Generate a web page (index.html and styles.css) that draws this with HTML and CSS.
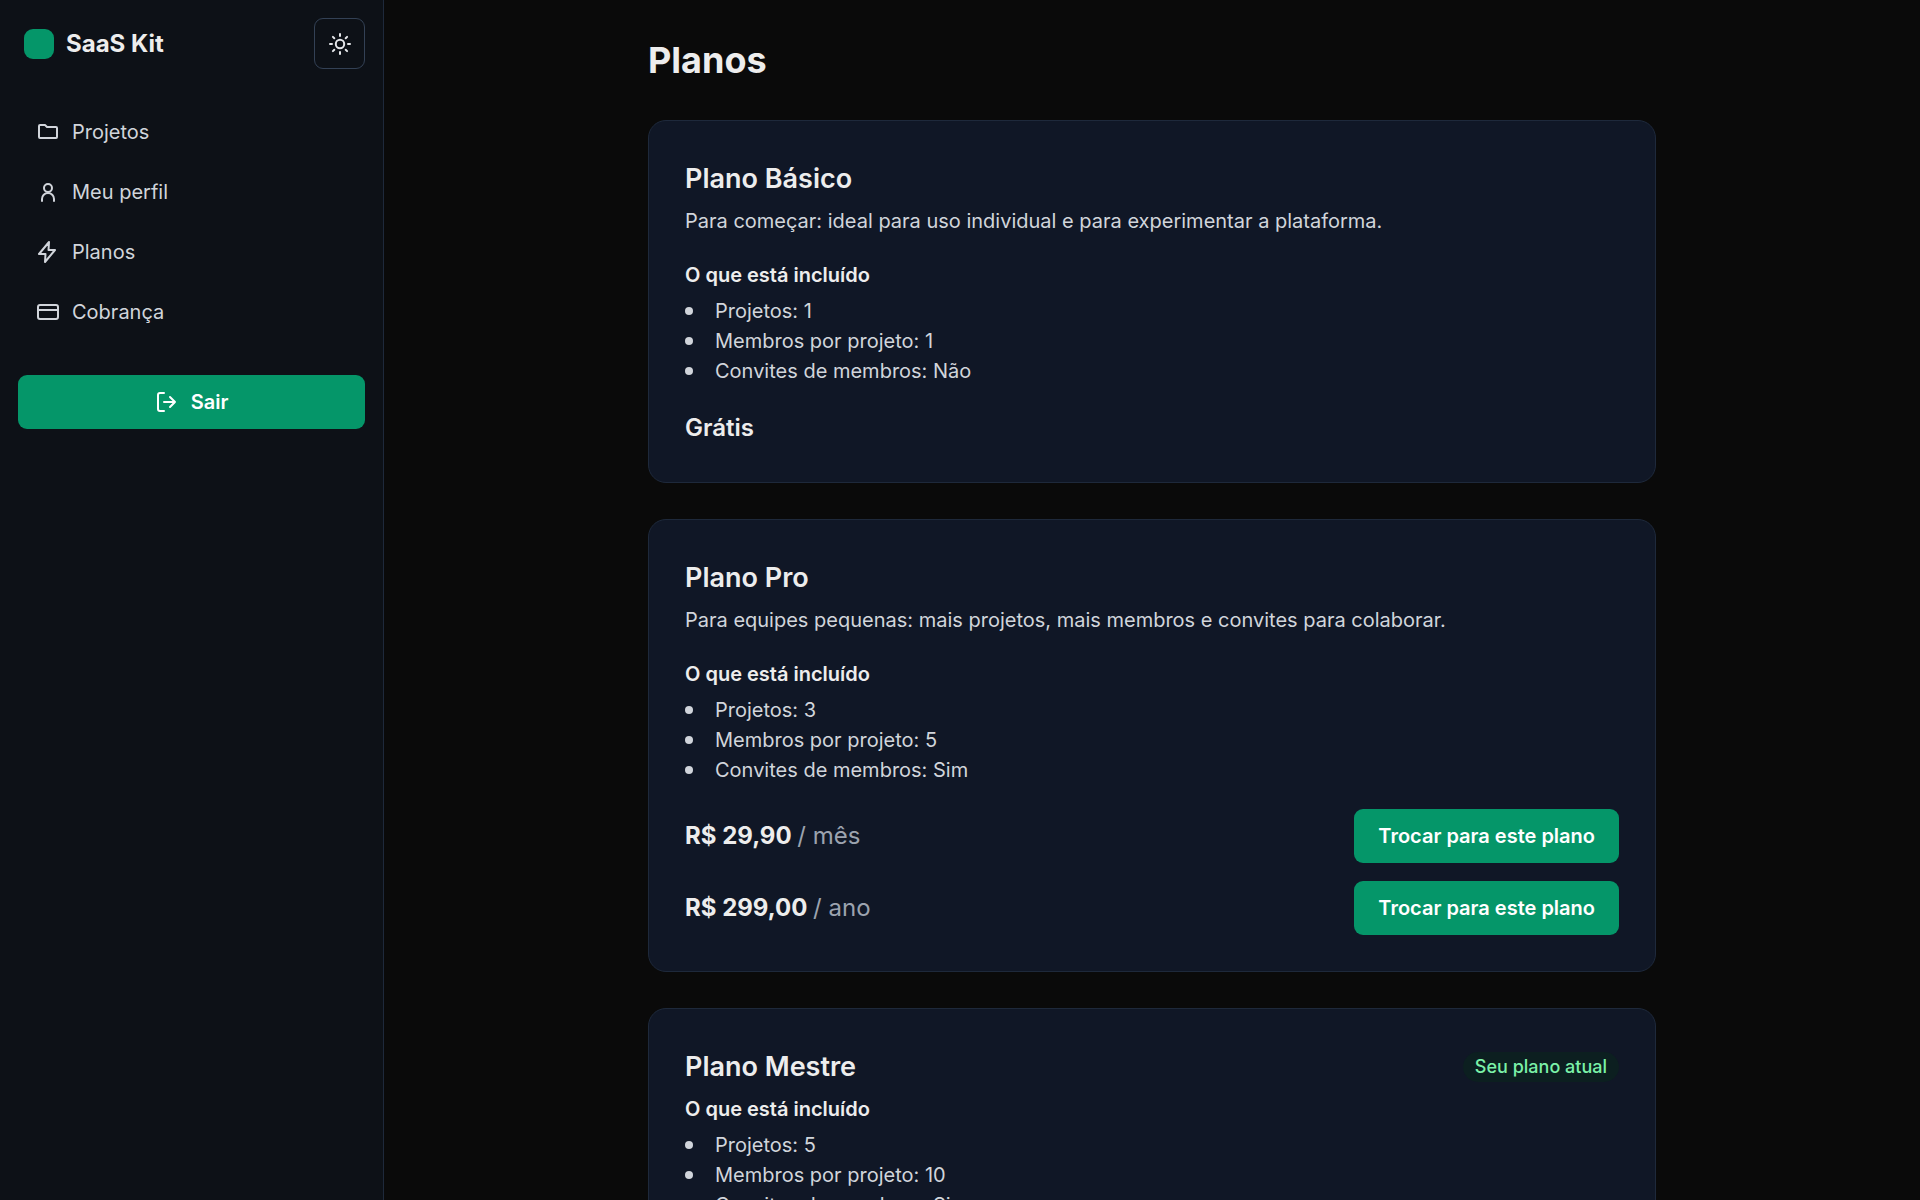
FILE: index.html
```html
<!DOCTYPE html>
<html lang="pt-BR">
<head>
<meta charset="utf-8">
<meta name="viewport" content="width=device-width, initial-scale=1">
<title>Planos</title>
<link rel="stylesheet" href="styles.css">
</head>
<body>
<aside class="sidebar">
  <header class="sidebar-header">
    <a class="brand" href="#"><span class="brand-mark"></span>SaaS Kit</a>
    <button class="theme-toggle" type="button" aria-label="Alternar tema">
      <svg class="icon" viewBox="0 0 24 24"><circle cx="12" cy="12" r="4.2"/><path d="M12 2v2M12 20v2M2 12h2M20 12h2M4.900 4.900l1.400 1.400M17.700 17.700l1.400 1.400M4.900 19.100l1.400-1.400M17.700 6.300l1.400-1.400"/></svg>
    </button>
  </header>
  <nav class="nav">
    <a class="nav-link" href="#"><svg class="icon" viewBox="0 0 24 24"><path d="M3 6a1 1 0 0 1 1-1h5l2 2h9a1 1 0 0 1 1 1v9a1 1 0 0 1-1 1H4a1 1 0 0 1-1-1z"/></svg>Projetos</a>
    <a class="nav-link" href="#"><svg class="icon" viewBox="0 0 24 24"><circle cx="12" cy="8" r="4"/><path d="M6 21v-2a6 6 0 0 1 12 0v2"/></svg>Meu perfil</a>
    <a class="nav-link" href="#"><svg class="icon" viewBox="0 0 24 24"><path d="M13 2 3 14h6.500L9 22l10-12h-6.500z"/></svg>Planos</a>
    <a class="nav-link" href="#"><svg class="icon" viewBox="0 0 24 24"><rect x="2" y="5" width="20" height="14" rx="2"/><path d="M2 10h20"/></svg>Cobrança</a>
  </nav>
  <button class="button button-block" type="button">
    <svg class="icon" viewBox="0 0 24 24"><path d="M9 21H5a2 2 0 0 1-2-2V5a2 2 0 0 1 2-2h4M15 7l5 5-5 5M20 12H9"/></svg>Sair
  </button>
</aside>
<main class="main">
  <div class="container">
    <h1 class="page-title">Planos</h1>
    <section class="card">
      <div class="card-header"><h2 class="card-title">Plano Básico</h2></div>
      <p class="description">Para começar: ideal para uso individual e para experimentar a plataforma.</p>
      <h3 class="subtitle">O que está incluído</h3>
      <ul class="features">
        <li>Projetos: 1</li>
        <li>Membros por projeto: 1</li>
        <li>Convites de membros: Não</li>
      </ul>
      <p class="price free">Grátis</p>
    </section>
    <section class="card">
      <div class="card-header"><h2 class="card-title">Plano Pro</h2></div>
      <p class="description">Para equipes pequenas: mais projetos, mais membros e convites para colaborar.</p>
      <h3 class="subtitle">O que está incluído</h3>
      <ul class="features">
        <li>Projetos: 3</li>
        <li>Membros por projeto: 5</li>
        <li>Convites de membros: Sim</li>
      </ul>
      <div class="offers">
        <div class="offer">
          <p class="price">R$ 29,90 <span class="period">/ mês</span></p>
          <button class="button" type="button">Trocar para este plano</button>
        </div>
        <div class="offer">
          <p class="price">R$ 299,00 <span class="period">/ ano</span></p>
          <button class="button" type="button">Trocar para este plano</button>
        </div>
      </div>
    </section>
    <section class="card">
      <div class="card-header"><h2 class="card-title">Plano Mestre</h2><span class="badge">Seu plano atual</span></div>
      <h3 class="subtitle">O que está incluído</h3>
      <ul class="features">
        <li>Projetos: 5</li>
        <li>Membros por projeto: 10</li>
        <li>Convites de membros: Sim</li>
      </ul>
    </section>
  </div>
</main>
</body>
</html>
```
FILE: styles.css
```css
* { box-sizing: border-box; margin: 0; padding: 0; }

body {
  display: flex;
  height: 100vh;
  overflow: hidden;
  background: #0a0a0a;
  color: #ededed;
  font: 400 20px/30px Inter, "Liberation Sans", sans-serif;
}

a { color: inherit; text-decoration: none; }

.icon {
  width: 24px;
  height: 24px;
  flex: none;
  fill: none;
  stroke: currentColor;
  stroke-width: 2;
  stroke-linecap: round;
  stroke-linejoin: round;
}

.sidebar {
  flex: none;
  width: 384px;
  padding: 18px;
  border-right: 1px solid #1e293b;
  background: #0d1117;
}

.sidebar-header {
  display: flex;
  align-items: center;
  justify-content: space-between;
  padding-left: 6px;
}

.brand {
  display: flex;
  align-items: center;
  gap: 12px;
  font-size: 24px;
  font-weight: 700;
}

.brand-mark {
  width: 30px;
  height: 30px;
  border-radius: 9px;
  background: #059669;
}

.theme-toggle {
  display: grid;
  place-items: center;
  width: 51px;
  height: 51px;
  border: 1px solid #334155;
  border-radius: 9px;
  background: transparent;
  color: #e5e7eb;
}

.nav {
  display: grid;
  gap: 6px;
  margin: 36px 0;
}

.nav-link {
  display: flex;
  align-items: center;
  gap: 12px;
  padding: 12px 18px;
  color: #d1d5db;
}

.button {
  display: flex;
  align-items: center;
  justify-content: center;
  gap: 12px;
  height: 54px;
  padding: 0 24px;
  border: 0;
  border-radius: 9px;
  background: #059669;
  color: #fff;
  font: inherit;
  font-weight: 600;
}

.button-block { width: 100%; }

.main {
  flex: 1;
  padding: 36px;
  overflow-y: auto;
  scrollbar-width: none;
}

.container {
  display: grid;
  gap: 36px;
  max-width: 1008px;
  margin: 0 auto;
}

.page-title { font-size: 36px; font-weight: 700; line-height: 48px; }

.card {
  padding: 36px;
  border: 1px solid #1e293b;
  border-radius: 18px;
  background: #101726;
}

.card-header {
  display: flex;
  align-items: center;
  justify-content: space-between;
  margin-bottom: 6px;
}

.card-title { font-size: 27px; font-weight: 600; line-height: 43px; }

.description { margin-bottom: 24px; color: #d1d5db; }

.subtitle { margin-bottom: 6px; font-size: 20px; font-weight: 600; }

.features { color: #d1d5db; list-style: none; }

.features li {
  display: flex;
  align-items: center;
  gap: 22px;
}

.features li::before {
  content: "";
  width: 8px;
  height: 8px;
  border-radius: 50%;
  background: currentColor;
}

.price { font-size: 24px; font-weight: 700; line-height: 36px; }

.free { margin-top: 24px; font-weight: 600; }

.period { color: #9ca3af; font-weight: 400; }

.offers { display: grid; gap: 18px; margin-top: 24px; }

.offer {
  display: flex;
  align-items: center;
  justify-content: space-between;
}

.badge {
  padding: 0 12px;
  border-radius: 15px;
  background: #0c1f20;
  color: #7bf1a8;
  font-size: 18px;
  font-weight: 500;
}
```
